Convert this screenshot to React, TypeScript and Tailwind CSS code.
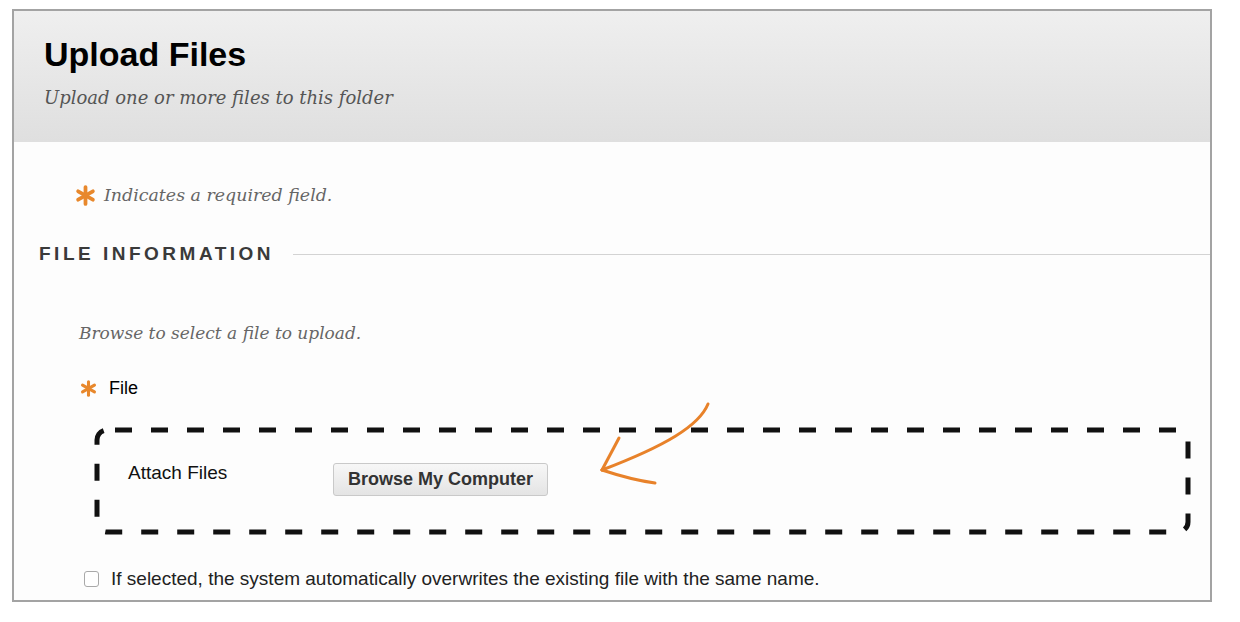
import React from "react"

const sans = { fontFamily: '"Liberation Sans", Arial, sans-serif' }
const serif = { fontFamily: '"DejaVu Serif", Georgia, serif' }

const Star = ({ size }: { size: number }) => (
    <svg width={size} height={size} viewBox="0 0 20 20">
        <g stroke="#e8882c" strokeWidth="3.6" strokeLinecap="round">
            <line x1="10" y1="2" x2="10" y2="18" />
            <line x1="3" y1="6" x2="17" y2="14" />
            <line x1="3" y1="14" x2="17" y2="6" />
        </g>
    </svg>
)

const DashedBox = ({ children }: { children: React.ReactNode }) => (
    <div className="relative w-[1097px] h-[108px]">
        <svg className="absolute inset-0" width="1097" height="108" viewBox="0 0 1097 108">
            <rect x="3" y="3" width="1091" height="102" rx="10" fill="none" stroke="#111" strokeWidth="5" strokeDasharray="17 19" strokeDashoffset="-8" />
        </svg>
        <div className="relative flex items-center h-full pl-[34px] pb-[16px]">{children}</div>
    </div>
)

const Arrow = () => (
    <svg className="absolute left-[595px] top-[398px]" width="120" height="92" viewBox="0 0 120 92">
        <g fill="none" stroke="#e8822a" strokeWidth="3" strokeLinecap="round">
            <path d="M113 6 C 104 28, 70 48, 7 72" />
            <path d="M7 72 L 24 40" />
            <path d="M7 72 C 25 78, 45 83, 60 85" />
        </g>
    </svg>
)

export default function App() {
    return (
        <div className="relative w-[1240px] h-[622px] bg-white pl-[12px] pt-[9px]" style={sans}>
            <div className="w-[1200px] h-[593px] border-2 border-[#a3a3a3] bg-[#fdfdfd] flex flex-col">
                <header className="h-[131px] bg-gradient-to-b from-[#efefef] to-[#dfdfdf] pl-[30px] pt-[23px]">
                    <h1 className="text-[34px] font-bold text-black leading-[40px]">Upload Files</h1>
                    <p className="italic text-[18px] text-[#555] mt-[10px]" style={serif}>Upload one or more files to this folder</p>
                </header>
                <div className="flex items-center gap-[8px] pl-[61px] mt-[40px]">
                    <Star size={21} />
                    <span className="italic text-[17.4px] text-[#666]" style={serif}>Indicates a required field.</span>
                </div>
                <div className="flex items-center mt-[32px] pl-[25px]">
                    <h2 className="text-[19px] font-bold tracking-[3.5px] text-[#3a3a3a] shrink-0">FILE INFORMATION</h2>
                    <div className="flex-1 h-px bg-[#d3d3d3] ml-[19px]" />
                </div>
                <p className="italic text-[17px] text-[#666] pl-[65px] mt-[52px]" style={serif}>Browse to select a file to upload.</p>
                <div className="flex items-center gap-[12px] pl-[66px] mt-[29px]">
                    <Star size={17} />
                    <span className="text-[18px] text-black">File</span>
                </div>
                <div className="pl-[80px] mt-[25px]">
                    <DashedBox>
                        <span className="text-[19px] text-[#111] w-[205px]">Attach Files</span>
                        <button className="mt-[12px] h-[33px] px-[14px] rounded-[3px] border border-[#c9c9c9] bg-gradient-to-b from-[#f7f7f7] to-[#e4e4e4] text-[18px] font-bold text-[#333]">Browse My Computer</button>
                    </DashedBox>
                </div>
                <label className="flex items-center gap-[12px] pl-[70px] mt-[30px]">
                    <span className="w-[15px] h-[16px] rounded-[3px] border border-[#a9a9a9] bg-white" />
                    <span className="text-[19px] text-[#222]">If selected, the system automatically overwrites the existing file with the same name.</span>
                </label>
            </div>
            <Arrow />
        </div>
    )
}
